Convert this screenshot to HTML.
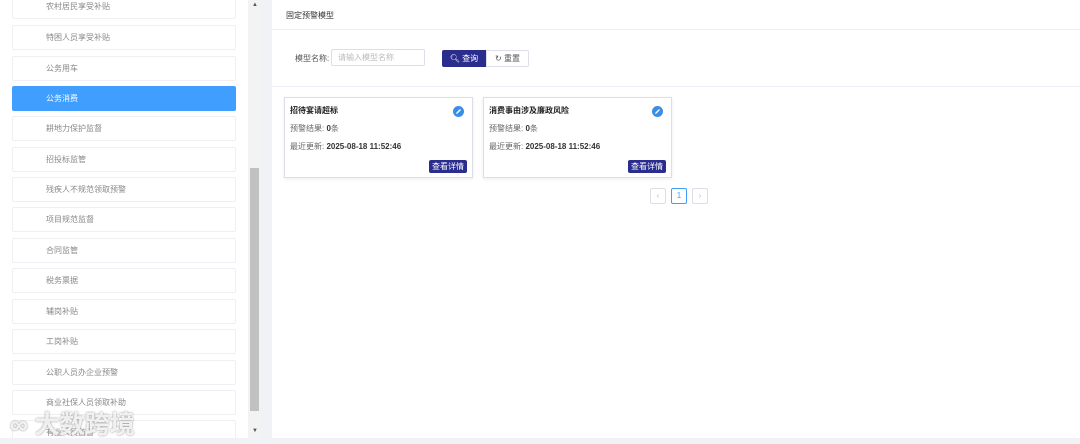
<!DOCTYPE html>
<html><head><meta charset="utf-8"><style>
*{box-sizing:border-box;margin:0;padding:0}
body{width:1080px;height:444px;background:#f0f2f5;font-family:"Liberation Sans","Noto Sans CJK SC",sans-serif;position:relative;overflow:hidden;font-size:8px;color:#333}
.left{position:absolute;left:0;top:0;width:248px;height:438px;background:#fff;overflow:hidden}
.item{position:absolute;left:12px;width:224px;height:25px;border:1px solid #eef0f3;border-radius:2px;background:#fff;color:#888;padding-left:33px;line-height:23px;font-size:8px}
.item.act{background:#409eff;color:#fff;border-color:#409eff}
.sb{position:absolute;left:249px;top:0;width:11px;height:438px;background:#f3f3f3}
.thumb{position:absolute;left:250px;top:168px;width:9px;height:243px;background:#c1c1c1}
.main{position:absolute;left:272px;top:0;width:808px;height:438px;background:#fff}
.hd{position:absolute;left:14px;top:10px;font-size:8px;color:#333}
.line{position:absolute;left:0;width:808px;height:1px;background:#ebeef5}
.card{position:absolute;top:97px;width:189px;height:81px;border:1px solid #dcdfe6;box-shadow:0 1px 3px rgba(0,0,0,.08);font-size:8px}
.card .t{position:absolute;left:5px;top:7px;font-weight:bold;color:#222}
.card .r{position:absolute;left:5px;top:25px;color:#666}
.card .u{position:absolute;left:5px;top:43px;color:#666}
.card b{color:#333}
.card .btn{position:absolute;right:5px;bottom:4px;width:38px;height:13px;background:#2b2d8e;color:#fff;border-radius:2px;text-align:center;line-height:13px;font-size:8px}
.card svg{position:absolute;right:8px;top:8px}
.pg{position:absolute;top:188px;width:16px;height:16px;border:1px solid #dcdfe6;border-radius:2px;text-align:center;line-height:14px;color:#bbb;font-size:8px}
</style></head><body>
<div class="left">
<div class="item" style="top:-6px">农村居民享受补贴</div>
<div class="item" style="top:25px">特困人员享受补贴</div>
<div class="item" style="top:56px">公务用车</div>
<div class="item act" style="top:86px">公务消费</div>
<div class="item" style="top:116px">耕地力保护监督</div>
<div class="item" style="top:147px">招投标监管</div>
<div class="item" style="top:177px">残疾人不规范领取预警</div>
<div class="item" style="top:207px">项目规范监督</div>
<div class="item" style="top:238px">合同监管</div>
<div class="item" style="top:268px">税务票据</div>
<div class="item" style="top:299px">辅岗补贴</div>
<div class="item" style="top:329px">工岗补贴</div>
<div class="item" style="top:360px">公职人员办企业预警</div>
<div class="item" style="top:390px">商业社保人员领取补助</div>
<div class="item" style="top:420px">有业人员监督</div>
</div>
<div style="position:absolute;left:10px;top:405px;font-size:25px;color:rgba(255,255,255,.85);text-shadow:0 0 2px #888;font-weight:bold">∞ 大数跨境</div>
<div class="sb"></div><div class="thumb"></div>
<div style="position:absolute;left:252px;top:2px;font-size:6px;color:#555">▲</div>
<div style="position:absolute;left:252px;top:428px;font-size:6px;color:#555">▼</div>
<div class="main">
<div class="hd">固定预警模型</div>
<div class="line" style="top:29px"></div>
<div style="position:absolute;left:23px;top:53px;color:#555">模型名称:</div>
<div style="position:absolute;left:59px;top:49px;width:94px;height:17px;border:1px solid #dcdfe6;border-radius:2px;color:#bbb;padding-left:6px;line-height:15px">请输入模型名称</div>
<div style="position:absolute;left:170px;top:50px;width:44px;height:17px;background:#2b2d8e;color:#fff;border-radius:2px 0 0 2px;text-align:center;line-height:17px">&#x1F50D;&#xFE0E; 查询</div>
<div style="position:absolute;left:214px;top:50px;width:43px;height:17px;border:1px solid #dcdfe6;color:#555;text-align:center;line-height:15px;border-radius:0 2px 2px 0">↻ 重置</div>
<div class="line" style="top:86px"></div>
<div class="card" style="left:12px"><div class="t">招待宴请超标</div><svg width="11" height="11" viewBox="0 0 11 11"><circle cx="5.5" cy="5.5" r="5.5" fill="#3a8ee6"/><path d="M3 8 L3.5 6.5 L7 3 L8 4 L4.5 7.5 Z" fill="#fff"/></svg><div class="r">预警结果: <b>0</b>条</div><div class="u">最近更新: <b>2025-08-18 11:52:46</b></div><div class="btn">查看详情</div></div>
<div class="card" style="left:211px"><div class="t">消费事由涉及廉政风险</div><svg width="11" height="11" viewBox="0 0 11 11"><circle cx="5.5" cy="5.5" r="5.5" fill="#3a8ee6"/><path d="M3 8 L3.5 6.5 L7 3 L8 4 L4.5 7.5 Z" fill="#fff"/></svg><div class="r">预警结果: <b>0</b>条</div><div class="u">最近更新: <b>2025-08-18 11:52:46</b></div><div class="btn">查看详情</div></div>
<div class="pg" style="left:378px">‹</div>
<div class="pg" style="left:399px;border-color:#409eff;color:#409eff">1</div>
<div class="pg" style="left:420px">›</div>
</div>
</body></html>
